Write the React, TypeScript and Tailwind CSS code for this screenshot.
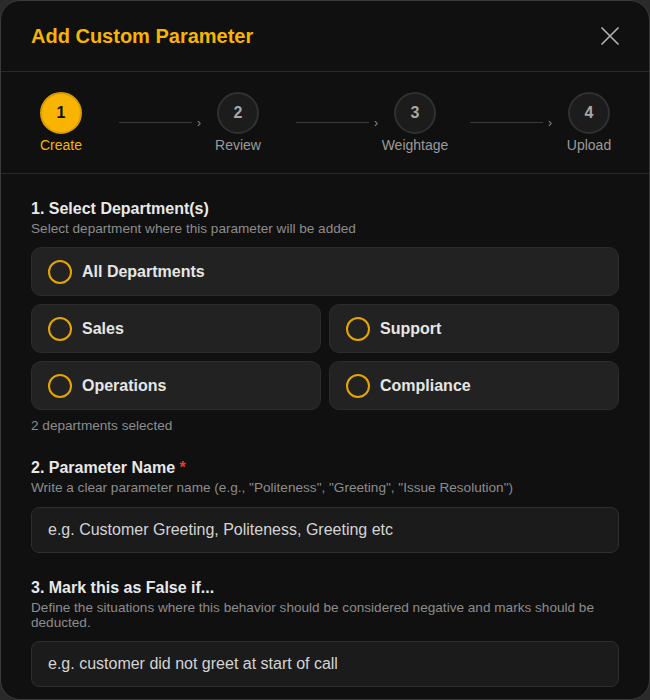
import { ReactNode } from 'react';

const steps = [
  { n: 1, label: 'Create', active: true },
  { n: 2, label: 'Review', active: false },
  { n: 3, label: 'Weightage', active: false },
  { n: 4, label: 'Upload', active: false },
];

function Step({ n, label, active }: { n: number; label: string; active: boolean }) {
  return (
    <div className="w-[68px] shrink-0 flex flex-col items-center">
      <div
        className={
          active
            ? 'w-[42px] h-[42px] rounded-full bg-[#f8b400] border-2 border-[#d99c00] flex items-center justify-center text-[#111] font-bold text-base'
            : 'w-[42px] h-[42px] rounded-full bg-[#1c1c1c] border-2 border-[#303030] flex items-center justify-center text-[#a8a8a8] font-bold text-base'
        }
      >
        {n}
      </div>
      <span className={active ? 'mt-[1px] text-sm text-[#f8b400]' : 'mt-[1px] text-sm text-[#9a9a9a]'}>{label}</span>
    </div>
  );
}

function Connector({ offset }: { offset: string }) {
  return (
    <div className={`flex-1 flex items-center mt-[23px] ${offset}`}>
      <div className="w-[73px] h-px bg-[#3a3a3a]" />
      <span className="ml-[5px] text-xs text-[#8a8a8a] leading-none mt-[2px]">›</span>
    </div>
  );
}

function Option({ label }: { label: string }) {
  return (
    <div className="h-[49px] rounded-[10px] bg-[#222222] border border-[#2c2c2c] flex items-center pl-4 gap-[10px]">
      <span className="w-6 h-6 rounded-full border-2 border-[#e6a600] shrink-0" />
      <span className="text-base font-bold text-[#e6e6e6]">{label}</span>
    </div>
  );
}

function Section({ title, hint, children, className }: { title: ReactNode; hint: string; children: ReactNode; className?: string }) {
  return (
    <section className={className}>
      <h3 className="text-base font-bold text-[#e8e8e8] leading-6">{title}</h3>
      <p className="text-[0.85rem] leading-[15px] text-[#8c8c8c]">{hint}</p>
      {children}
    </section>
  );
}

export default function App() {
  return (
    <div className="w-[650px] h-[700px] bg-[#2a2a2a]" style={{ fontFamily: '"Liberation Sans", Arial, sans-serif' }}>
      <div className="h-full rounded-[20px] border border-[#3a3a3a] bg-[#101010] overflow-hidden flex flex-col">
        {/* Header */}
        <div className="h-[71px] shrink-0 flex items-center justify-between pl-[30px] pr-[30px] border-b border-[#2a2a2a]">
          <h2 className="text-xl font-bold text-[#f8b400]">Add Custom Parameter</h2>
          <svg width="18" height="18" viewBox="0 0 18 18" className="text-[#b0b0b0]">
            <path d="M1 1 17 17M17 1 1 17" stroke="currentColor" strokeWidth="1.7" strokeLinecap="round" />
          </svg>
        </div>

        {/* Stepper */}
        <div className="shrink-0 flex items-start pl-[26px] pr-[26px] pt-[20px] pb-[18px] border-b border-[#2a2a2a]">
          <Step {...steps[0]} />
          <Connector offset="pl-6" />
          <Step {...steps[1]} />
          <Connector offset="pl-6" />
          <Step {...steps[2]} />
          <Connector offset="pl-[21px]" />
          <Step {...steps[3]} />
        </div>

        {/* Body */}
        <div className="flex-1 overflow-hidden px-[30px] pt-[23px]">
          <Section title="1. Select Department(s)" hint="Select department where this parameter will be added">
            <div className="mt-[11px] flex flex-col gap-2">
              <Option label="All Departments" />
              <div className="grid grid-cols-2 gap-2">
                <Option label="Sales" />
                <Option label="Support" />
                <Option label="Operations" />
                <Option label="Compliance" />
              </div>
            </div>
            <p className="mt-2 text-[0.85rem] leading-4 text-[#8c8c8c]">2 departments selected</p>
          </Section>

          <Section
            className="mt-[22px]"
            title={<>2. Parameter Name <span className="text-[#e53935]">*</span></>}
            hint={'Write a clear parameter name (e.g., "Politeness", "Greeting", "Issue Resolution")'}
          >
            <div className="mt-3 h-[46px] rounded-lg bg-[#1b1b1b] border border-[#2e2e2e] flex items-center px-4 text-base text-[#d4d4d4]">
              e.g. Customer Greeting, Politeness, Greeting etc
            </div>
          </Section>

          <Section
            className="mt-[23px]"
            title="3. Mark this as False if..."
            hint="Define the situations where this behavior should be considered negative and marks should be deducted."
          >
            <div className="mt-[11px] h-[46px] rounded-lg bg-[#1b1b1b] border border-[#2e2e2e] flex items-center px-4 text-base text-[#d4d4d4]">
              e.g. customer did not greet at start of call
            </div>
          </Section>
        </div>
      </div>
    </div>
  );
}
